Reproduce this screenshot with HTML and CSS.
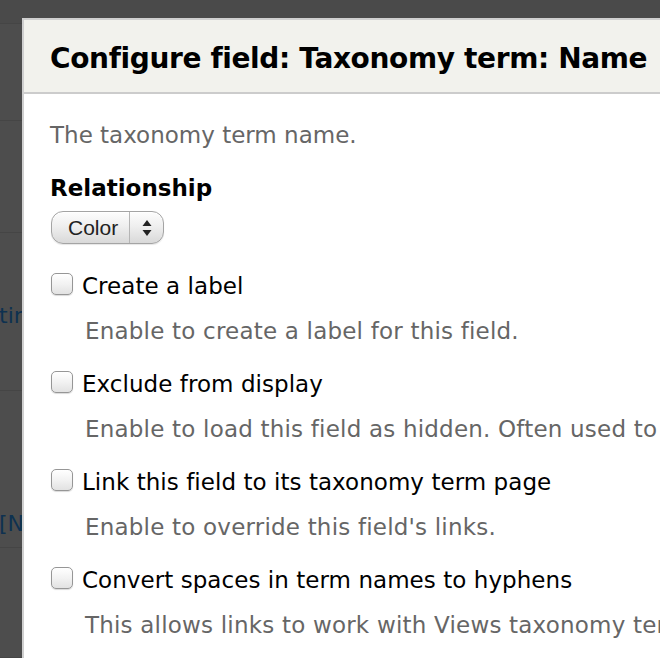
FILE: index.html
```html
<!DOCTYPE html>
<html>
<head>
<meta charset="utf-8">
<link rel="stylesheet" href="styles.css">
</head>
<body>
<div class="bg">
  <div class="bg-row r1"></div>
  <div class="bg-row r2"></div>
  <div class="bg-row r3"></div>
  <div class="bg-row r4"><span class="bg-text t1">tin</span></div>
  <div class="bg-row r5"><span class="bg-text t2">[Na</span></div>
  <div class="bg-row r6"></div>
</div>

<div class="modal">
  <div class="modal-title">Configure field: Taxonomy term: Name</div>
  <div class="modal-body">
    <div class="intro">The taxonomy term name.</div>
    <div class="section-label">Relationship</div>
    <div class="select">
      <span class="select-text">Color</span>
      <span class="select-arrows">
        <svg width="10" height="16" viewBox="0 0 10 16"><path d="M5 0 L9.5 6 L0.5 6 Z" fill="#222"/><path d="M0.5 10 L9.5 10 L5 16 Z" fill="#222"/></svg>
      </span>
    </div>

    <div class="option">
      <div class="option-row"><span class="checkbox"></span><span class="option-label">Create a label</span></div>
      <div class="option-desc">Enable to create a label for this field.</div>
    </div>
    <div class="option">
      <div class="option-row"><span class="checkbox"></span><span class="option-label">Exclude from display</span></div>
      <div class="option-desc">Enable to load this field as hidden. Often used to group fields, or to use as token in another field.</div>
    </div>
    <div class="option">
      <div class="option-row"><span class="checkbox"></span><span class="option-label">Link this field to its taxonomy term page</span></div>
      <div class="option-desc">Enable to override this field's links.</div>
    </div>
    <div class="option">
      <div class="option-row"><span class="checkbox"></span><span class="option-label">Convert spaces in term names to hyphens</span></div>
      <div class="option-desc">This allows links to work with Views taxonomy term arguments.</div>
    </div>
  </div>
</div>
</body>
</html>
```
FILE: styles.css
```css
html, body {
  margin: 0;
  padding: 0;
  width: 660px;
  height: 658px;
  overflow: hidden;
}
body {
  background: #4d4d4d;
  font-family: "DejaVu Sans", Verdana, sans-serif;
  position: relative;
}

.bg {
  display: flex;
  flex-direction: column;
}
.bg-row {
  border-bottom: 1px solid #454545;
  box-sizing: border-box;
  position: relative;
  overflow: hidden;
}
.r1 { height: 24px; background: #4a4a4a; }
.r2 { height: 97px; }
.r3 { height: 112px; }
.r4 { height: 158px; }
.r5 { height: 157px; }
.r6 { height: 110px; }

.bg-text {
  display: block;
  color: #0e3150;
  font-size: 22px;
  line-height: 26px;
  white-space: nowrap;
  margin-left: -1px;
}
.t1 { padding-top: 70px; }
.t2 { padding-top: 120px; margin-left: -1px; }

.modal {
  position: absolute;
  left: 22px;
  top: 18px;
  width: 760px;
  height: 700px;
  background: #fff;
  border-left: 2px solid #cfcfcf;
  border-top: 2px solid #cfcfcf;
}

.modal-title {
  background: #f2f2ed;
  border-bottom: 2px solid #cccccc;
  font-weight: bold;
  font-size: 28px;
  letter-spacing: -0.36px;
  line-height: 33px;
  color: #000;
  padding: 22px 0 17px 26px;
  white-space: nowrap;
}

.modal-body {
  padding: 28px 0 0 26px;
  font-size: 23px;
  line-height: 27px;
  white-space: nowrap;
}

.intro {
  color: #666;
}

.section-label {
  margin-top: 26px;
  font-weight: bold;
  color: #000;
}

.select {
  margin-top: 9px;
  margin-left: 1px;
  width: 113px;
  height: 33px;
  box-sizing: border-box;
  border: 1px solid #a4a4a4;
  border-radius: 12px;
  background: linear-gradient(#fdfdfd 0%, #efefef 45%, #d9d9d9 100%);
  box-shadow: inset 0 1px 0 #fff, 0 1px 1px rgba(0,0,0,0.1);
  display: flex;
  align-items: center;
}
.select-text {
  font-family: "Liberation Sans", Arial, sans-serif;
  font-size: 21px;
  color: #222;
  width: 78px;
  box-sizing: border-box;
  padding-left: 16px;
  height: 100%;
  display: flex;
  align-items: center;
  border-right: 1px solid #b5b5b5;
}
.select-arrows {
  flex: 1;
  display: flex;
  align-items: center;
  justify-content: center;
  height: 100%;
}
.select-arrows svg { display: block; }

.option {
  margin-top: 29px;
}
.option + .option {
  margin-top: 26px;
}
.option-row {
  display: flex;
  align-items: flex-start;
  color: #000;
}
.checkbox {
  width: 22px;
  height: 22px;
  box-sizing: border-box;
  margin-left: 1px;
  margin-right: 9px;
  border: 1px solid #969696;
  border-radius: 5px;
  background: linear-gradient(#ffffff 0%, #f2f2f2 50%, #e2e2e2 100%);
  box-shadow: 0 1px 1px rgba(0,0,0,0.15);
  flex: none;
}
.option-label {
  letter-spacing: 0.05px;
}
.option-desc {
  margin-top: 18px;
  margin-left: 35px;
  color: #666;
  letter-spacing: 0.2px;
}
```
